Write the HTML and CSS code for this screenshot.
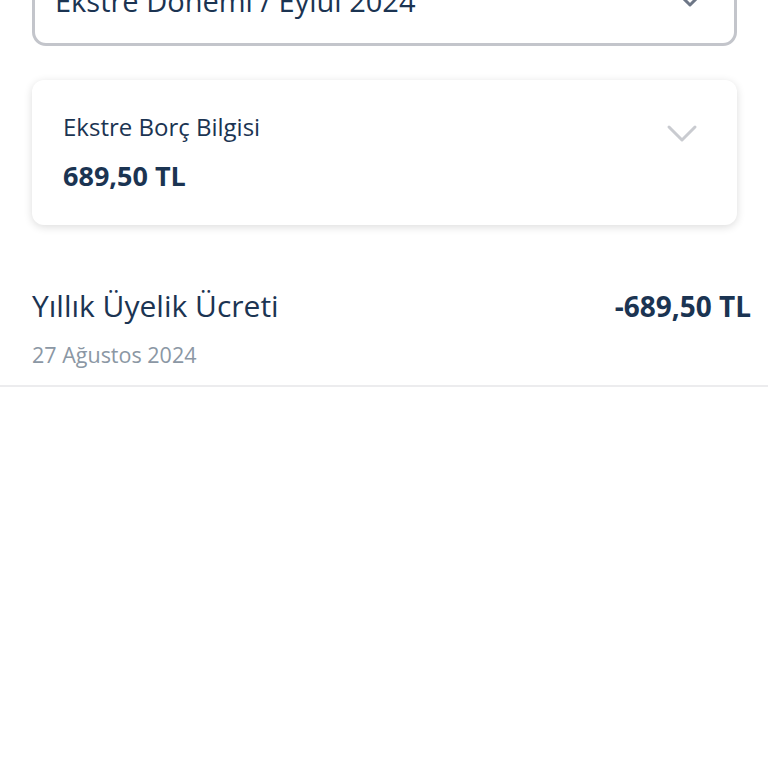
FILE: index.html
```html
<!DOCTYPE html>
<html lang="tr">
<head>
  <meta charset="UTF-8">
  <meta name="viewport" content="width=device-width, initial-scale=1">
  <title>Ekstre</title>
  <link rel="stylesheet" href="styles.css">
</head>
<body>

<div class="page">
  <!-- Period selector -->
  <div class="period">
    <span class="period-text">Ekstre Dönemi / Eylül 2024</span>
    <svg class="chevron dark" width="32" height="20" viewBox="0 0 32 20">
      <path d="M3 3 L16 16 L29 3" fill="none" stroke="currentColor" stroke-width="3" stroke-linecap="round" stroke-linejoin="round"/>
    </svg>
  </div>

  <!-- Statement debt card -->
  <div class="card">
    <div class="card-body">
      <div class="card-label">Ekstre Borç Bilgisi</div>
      <div class="card-amount">689,50 TL</div>
    </div>
    <svg class="chevron light" width="32" height="20" viewBox="0 0 32 20">
      <path d="M3 3 L16 16 L29 3" fill="none" stroke="currentColor" stroke-width="3" stroke-linecap="round" stroke-linejoin="round"/>
    </svg>
  </div>
</div>

<ul class="transactions">
  <li class="tx">
    <div class="tx-main">
      <span class="tx-title">Yıllık Üyelik Ücreti</span>
      <span class="tx-amount">-689,50 TL</span>
    </div>
    <div class="tx-date">27 Ağustos 2024</div>
  </li>
</ul>

</body>
</html>
```

FILE: styles.css
```css
/* Basic reset and typography */
body {
  font-family: "Open Sans", "Noto Sans", sans-serif;
  margin: 0;
  background: #fff;
  color: #1b3452;
}
.page {
  padding: 0 31px 0 32px;
}
.period {
  margin-top: -54px;
  height: 100px;
  border: 3px solid #c3c5cb;
  border-radius: 14px;
  padding: 0 28px 22px 20px;
  display: flex;
  align-items: flex-end;
  justify-content: space-between;
  box-sizing: border-box;
}
.period-text {
  font-size: 29px;
  line-height: 40px;
}
.chevron.dark {
  color: #6d7686;
  margin-bottom: 12px;
}
.card {
  margin-top: 34px;
  height: 145px;
  border-radius: 12px;
  background: #fff;
  box-shadow: 0 2px 9px rgba(0, 0, 0, 0.14);
  padding: 32px 39px 0 31px;
  display: flex;
  align-items: flex-start;
  justify-content: space-between;
  box-sizing: border-box;
}
.card-label {
  font-size: 24px;
  line-height: 30px;
}
.card-amount {
  font-size: 27px;
  font-weight: bold;
  line-height: 36px;
  margin-top: 16px;
}
.chevron.light {
  color: #c9cbd0;
  margin-top: 12px;
}
.transactions {
  list-style: none;
  margin: 61px 0 0;
  padding: 0;
}
.tx {
  padding: 0 17px 15px 32px;
  border-bottom: 2px solid #ececee;
}
.tx-main {
  display: flex;
  justify-content: space-between;
  align-items: baseline;
}
.tx-title {
  font-size: 30px;
  line-height: 40px;
}
.tx-amount {
  font-size: 28px;
  font-weight: bold;
}
.tx-date {
  margin-top: 14px;
  font-size: 21.5px;
  line-height: 30px;
  color: #8b97a4;
}
```
